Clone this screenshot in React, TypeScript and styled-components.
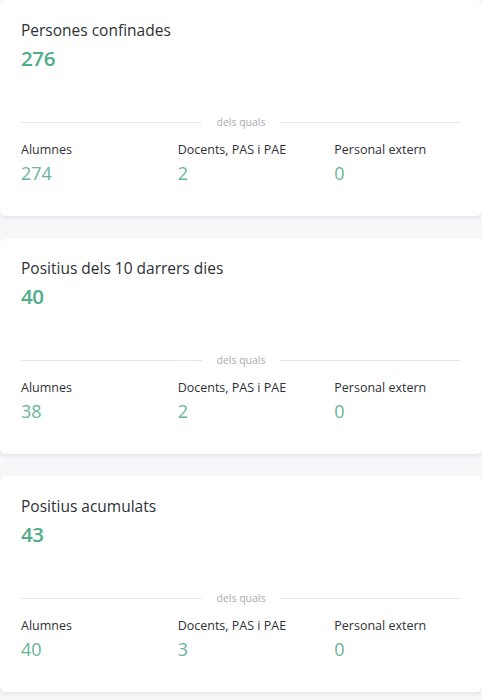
import * as React from 'react';
import styled, { createGlobalStyle } from 'styled-components';

const GlobalStyle = createGlobalStyle`
	html, body {
		margin: 0;
		padding: 0;
		background: #f6f7f9;
		font-family: "Open Sans", "Noto Sans", sans-serif;
	}
`;

const Page = styled.div`
	display: flex;
	flex-direction: column;
	gap: 22px;
	padding-bottom: 22px;
`;

const Card = styled.div`
	background: #ffffff;
	border-radius: 6px;
	box-shadow: 0 2px 4px rgba(30, 40, 60, 0.09);
	height: 216px;
	box-sizing: border-box;
	padding: 19px 21px 0 21px;
	display: flex;
	flex-direction: column;
`;

const Title = styled.h3`
	margin: 0;
	font-size: 15.5px;
	font-weight: 400;
	line-height: 22px;
	color: #2f3136;
`;

const Total = styled.div`
	margin-top: 3px;
	font-size: 20.5px;
	font-weight: 600;
	line-height: 28px;
	color: #4fad87;
	letter-spacing: -0.4px;
`;

const Divider = styled.div`
	display: flex;
	align-items: center;
	gap: 14px;
	margin-top: 43px;
	font-size: 10.5px;
	color: #a9abb0;
	line-height: 14px;
	&::before, &::after {
		content: "";
		flex: 1;
		height: 1px;
		background: #e6e7ea;
	}
`;

const Breakdown = styled.div`
	display: grid;
	grid-template-columns: repeat(3, 1fr);
	column-gap: 30px;
	margin-top: 12px;
`;

const Item = styled.div`
	display: flex;
	flex-direction: column;
`;

const Label = styled.span`
	font-size: 12.5px;
	line-height: 18px;
	color: #2f3136;
`;

const Count = styled.span`
	margin-top: 1px;
	font-size: 18px;
	font-weight: 400;
	line-height: 26px;
	color: #68b597;
`;

interface Stat {
	title: string;
	total: number;
	parts: [string, number][];
}

const stats: Stat[] = [
	{ title: 'Persones confinades', total: 276, parts: [['Alumnes', 274], ['Docents, PAS i PAE', 2], ['Personal extern', 0]] },
	{ title: 'Positius dels 10 darrers dies', total: 40, parts: [['Alumnes', 38], ['Docents, PAS i PAE', 2], ['Personal extern', 0]] },
	{ title: 'Positius acumulats', total: 43, parts: [['Alumnes', 40], ['Docents, PAS i PAE', 3], ['Personal extern', 0]] },
];

const StatCard: React.FC<{ stat: Stat }> = ({ stat }) => (
	<Card>
		<Title>{stat.title}</Title>
		<Total>{stat.total}</Total>
		<Divider>dels quals</Divider>
		<Breakdown>
			{stat.parts.map(([label, value]) => (
				<Item key={label}>
					<Label>{label}</Label>
					<Count>{value}</Count>
				</Item>
			))}
		</Breakdown>
	</Card>
);

export default function App() {
	return (
		<>
			<GlobalStyle />
			<Page>
				{stats.map(s => <StatCard key={s.title} stat={s} />)}
			</Page>
		</>
	);
}
